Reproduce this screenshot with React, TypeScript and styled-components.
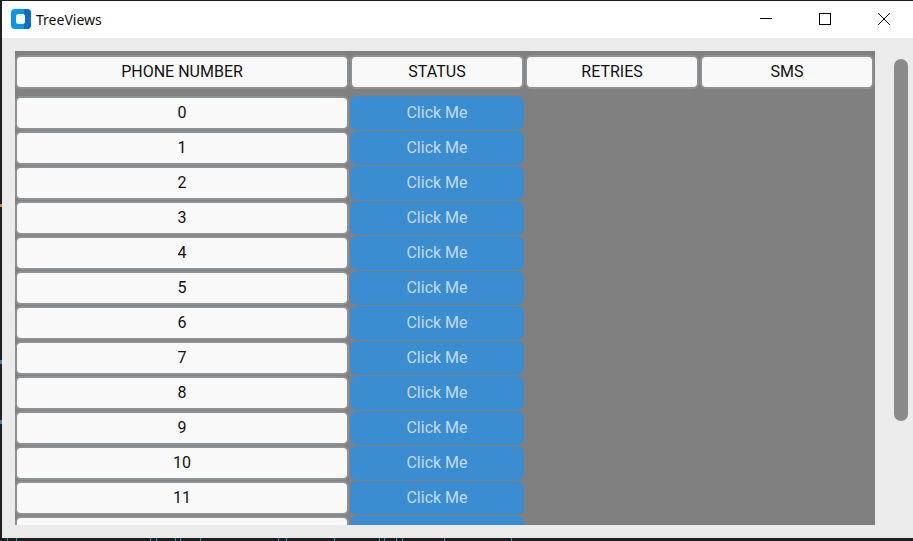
import React from "react";
import styled, { createGlobalStyle } from "styled-components";

const Global = createGlobalStyle`
  html, body { margin: 0; padding: 0; background: #1f2023; overflow: hidden; }
  #root { width: 913px; height: 541px; }
`;

const Desktop = styled.div`
  position: relative;
  width: 913px;
  height: 541px;
  box-sizing: border-box;
  padding: 1px 0 3px 2px;
  background: #1f2023;
  font-family: Roboto, "Liberation Sans", sans-serif;
`;

const Backdrop = styled.svg`
  position: absolute;
  inset: 0;
`;

const Win = styled.div`
  position: relative;
  height: 100%;
  display: flex;
  flex-direction: column;
  background: #ebebeb;
`;

const TitleBar = styled.header`
  height: 37px;
  flex: none;
  box-sizing: border-box;
  display: flex;
  align-items: center;
  background: #fff;
  padding: 0 0 1px 9px;
`;

const AppTitle = styled.span`
  margin-left: 5px;
  font: 14px "Noto Sans", "Open Sans", sans-serif;
  color: #111;
`;

const WinControls = styled.div`
  margin-left: auto;
  display: flex;
  gap: 1px;
`;

const WinButton = styled.div`
  width: 58px;
  height: 36px;
  display: flex;
  align-items: center;
  justify-content: center;
`;

const Body = styled.main`
  flex: 1;
  min-height: 0;
  display: flex;
  padding: 13px 0 13px 13px;
  gap: 19px;
`;

const TableArea = styled.section`
  width: 860px;
  height: 474px;
  overflow: hidden;
  background: #808080;
  padding-top: 4px;
  box-sizing: border-box;
`;

const Grid = styled.div`
  display: grid;
  grid-template-columns: 334px repeat(3, 174px);
  grid-auto-rows: 34px;
  gap: 1px;
`;

const HeaderRow = styled(Grid)`
  margin-bottom: 7px;
`;

const Cell = styled.div`
  box-sizing: border-box;
  display: flex;
  align-items: center;
  justify-content: center;
  padding-bottom: 1px;
  background: #f9f9f9;
  border: 2px solid #8f9295;
  border-radius: 6px;
  font-size: 16px;
  color: #111;
`;

const ClickMe = styled.button`
  box-sizing: border-box;
  padding: 0 0 1px;
  margin: 0;
  border: none;
  border-radius: 7px;
  background: #3a8dd1;
  color: #c4dcf2;
  font: 16px Roboto, sans-serif;
`;

const Scrollbar = styled.div`
  width: 14px;
  height: 362px;
  margin-top: 8px;
  flex: none;
  background: #8a8a8a;
  border-radius: 7px;
`;

const rows = Array.from({ length: 13 }, (_, i) => i);
const specks = [7, 16, 150, 156, 175, 180, 200, 278, 286, 334, 379, 384, 396, 402, 444, 511];

export default function App() {
  return (
    <Desktop>
      <Global />
      <Backdrop width="913" height="541" viewBox="0 0 913 541">
        {specks.map((x) => (
          <rect key={x} x={x} y="538" width="1" height="3" fill="#2f8fd6" />
        ))}
        <rect x="0" y="204" width="2" height="3" fill="#c98a35" />
        <rect x="0" y="360" width="2" height="4" fill="#4a7da3" />
        <rect x="0" y="420" width="2" height="4" fill="#4a7da3" />
      </Backdrop>
      <Win>
        <TitleBar>
          <svg width="20" height="20" viewBox="0 0 20 20">
            <rect width="20" height="20" rx="4" fill="#0a95ee" />
            <path d="M16 0a4 4 0 0 1 4 4v12a4 4 0 0 1-4 4h-3V0z" fill="#0a6fc0" />
            <rect x="5" y="5" width="9" height="10" rx="2.5" fill="#fff" />
          </svg>
          <AppTitle>TreeViews</AppTitle>
          <WinControls>
            <WinButton>
              <svg width="12" height="12" viewBox="0 0 12 12"><path d="M0 5.5h12" stroke="#000" fill="none" /></svg>
            </WinButton>
            <WinButton>
              <svg width="12" height="12" viewBox="0 0 12 12"><rect x=".5" y=".5" width="11" height="11" stroke="#000" fill="none" /></svg>
            </WinButton>
            <WinButton>
              <svg width="12" height="12" viewBox="0 0 12 12"><path d="M0 0l12 12M12 0L0 12" stroke="#000" fill="none" /></svg>
            </WinButton>
          </WinControls>
        </TitleBar>
        <Body>
          <TableArea>
            <HeaderRow>
              <Cell>PHONE NUMBER</Cell>
              <Cell>STATUS</Cell>
              <Cell>RETRIES</Cell>
              <Cell>SMS</Cell>
            </HeaderRow>
            <Grid>
              {rows.map((n) => (
                <React.Fragment key={n}>
                  <Cell>{n < 12 ? n : null}</Cell>
                  <ClickMe>{n < 12 ? "Click Me" : null}</ClickMe>
                  <span />
                  <span />
                </React.Fragment>
              ))}
            </Grid>
          </TableArea>
          <Scrollbar />
        </Body>
      </Win>
    </Desktop>
  );
}
